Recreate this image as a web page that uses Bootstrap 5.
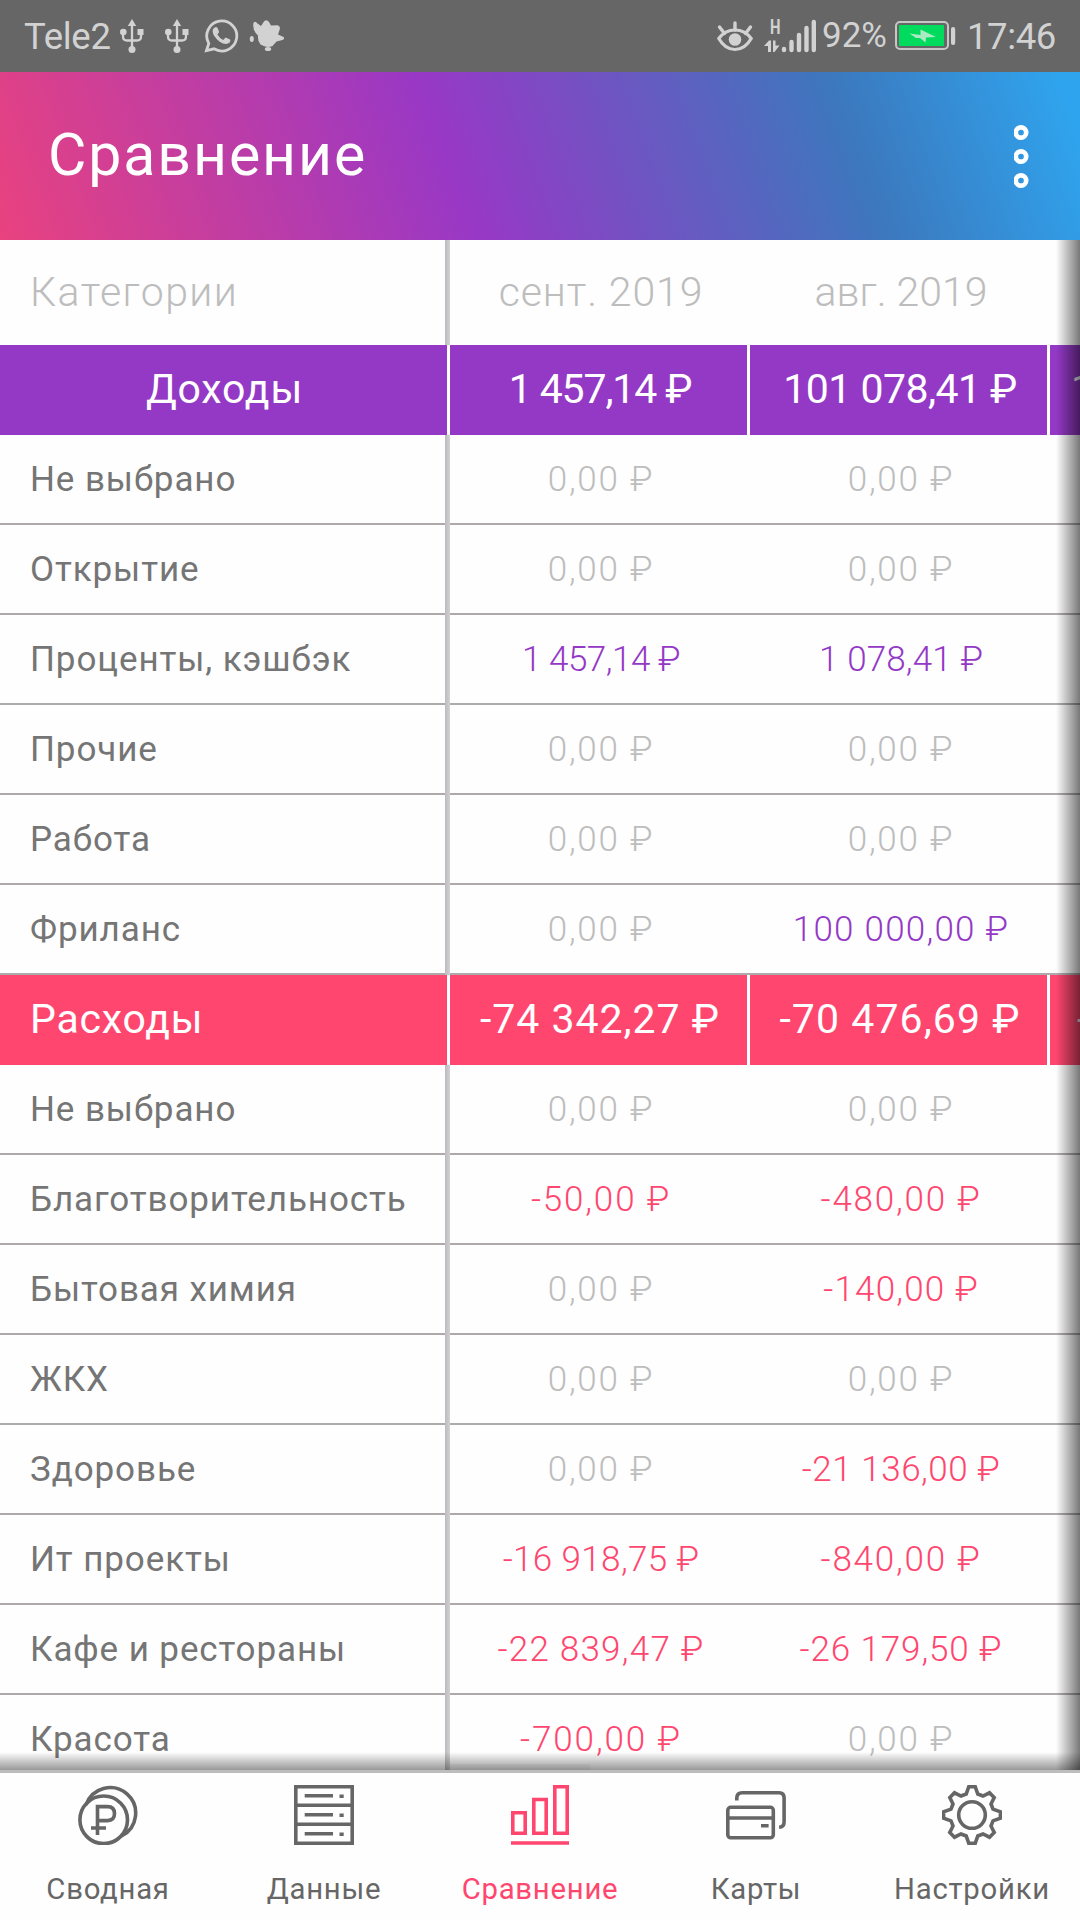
<!DOCTYPE html>
<html lang="ru">
<head>
<meta charset="utf-8">
<meta name="viewport" content="width=device-width, initial-scale=1">
<title>Сравнение</title>
<link href="https://cdn.jsdelivr.net/npm/bootstrap@5.3.0/dist/css/bootstrap.min.css" rel="stylesheet">
<style>
:root{--violet:#9439c6;--rose:#ff466f;--ink:#757575;--mute:#bdbdbd;--rule:#aeaaab}
body{width:1080px;height:1920px;overflow:hidden;background:#fefefe;font-family:Roboto,"Noto Sans",sans-serif;line-height:1}
svg{display:block;flex:none}
.sysbar{height:72px;background:#666;color:#d2d2d2;font-size:36.5px;padding:0 25px 0 24px}
.carrier{width:92px;letter-spacing:-.3px;padding-top:3px}
.pct{width:77px;padding-left:5px;font-size:35px;padding-bottom:1px}
.clock{width:88px;letter-spacing:-.4px;margin-left:9px;padding-top:3px}
.ico-usb2{margin-left:21px}.ico-chat{margin-left:14px}.ico-splash{margin-left:10px}.ico-net{margin-left:11px}
.hspa{font:700 20.5px Roboto,sans-serif}
.appbar{height:168px;background:linear-gradient(70deg,#e9427f 0%,#9838c6 42%,#3c78bd 78%,#2fa4ee 98%);padding:0 50px 0 48px}
.apptitle{font-size:59px;font-weight:400;color:#fff;letter-spacing:1.9px;padding-bottom:2px}
.sheet{height:1530px}
.line{height:90px;width:1350px;flex:none}
.name{width:450px;padding-left:30px;font-size:35px;color:var(--ink);letter-spacing:.9px;border-bottom:2px solid var(--rule);position:relative}
.num{width:300px;font-size:35px;font-weight:300;color:var(--mute);border-bottom:2px solid var(--rule);padding-left:2px}
.name::after{content:"";position:absolute;right:0;top:0;bottom:-2px;width:5px;background:linear-gradient(90deg,#bbbabd,#d2d2d7)}
.heads{height:105px}
.heads .name,.heads .num{border:0;font-size:41px;font-weight:300;color:var(--mute);letter-spacing:1.4px}
.heads .num{letter-spacing:.9px}
.heads .num + .num{letter-spacing:0}
.heads .name::after{bottom:0}
.total .name,.total .num{font-size:41px;font-weight:400;color:#fff;border:0;border-right:3px solid #fff;letter-spacing:.8px;padding-bottom:2px}
.total .num{padding-left:3px}
.total .name::after{display:none}
.total .name.justify-content-center{padding-left:2px}
.inc{color:var(--violet)}.exp{color:var(--rose)}
.bg-inc{background:var(--violet)}.bg-exp{background:var(--rose)}
.total .num.peek{justify-content:flex-start!important;padding-left:21px}
.bg-exp .num.peek{padding-left:27px}
.shade-r{right:0;top:0;bottom:0;width:24px;background:linear-gradient(90deg,rgba(0,0,0,0),rgba(0,0,0,.53))}
.shade-b{left:0;right:0;bottom:0;height:18px;background:linear-gradient(rgba(0,0,0,0),rgba(0,0,0,.4))}
.thumb{left:450px;bottom:0;width:140px;height:6px;background:rgba(0,0,0,.04)}
.tabs{height:150px;border-top:3px solid #bdbdbd;background:#fefefe;font-size:29.3px;color:#666}
.tab{width:216px;padding-top:12px;letter-spacing:.75px;color:inherit;text-decoration:none}
.tab.active{color:var(--rose)}
.tab span{margin-top:30px}
.tab svg{fill:none;stroke:currentColor;stroke-width:3.6}
</style>
</head>
<body>
<svg width="0" height="0" class="position-absolute"><defs>
<g id="usb" fill="#d2d2d2"><path d="M12 0l4.200 7H7.800z"/><path d="M12 5v25M3 13v4.500q0 4 4 4h10q4 0 4-4V13" fill="none" stroke="#d2d2d2" stroke-width="2.300"/><circle cx="3.300" cy="13" r="3.300"/><rect x="17.500" y="10" width="6" height="6"/><circle cx="12" cy="30.500" r="3.500"/></g>
</defs></svg>
<header class="sysbar d-flex align-items-center">
  <span class="carrier">Tele2</span>
  <svg width="24" height="34" class="ms-1"><use href="#usb"/></svg>
  <svg width="24" height="34" class="ico-usb2"><use href="#usb"/></svg>
  <svg width="36" height="36" viewBox="0 0 36 36" class="ico-chat"><path d="M3.500 32.500L5.800 25.500A15 15 0 1 1 11 30.800z" fill="none" stroke="#d2d2d2" stroke-width="2.800"/><path d="M10.500 10.500q2-2.500 3.800-1l1.900 4.400-1.800 2.700q2.200 4 5.800 5.300l2.400-2.300 4.500 2q1 2.800-2.200 4-3.500 1.200-8.500-2.200-6.500-5-6.700-9.800-.2-2 .8-3.100z" fill="#d2d2d2"/></svg>
  <svg width="36" height="36" viewBox="0 0 36 36" class="ico-splash" fill="#d2d2d2"><path d="M4.500 5Q6 2.500 8.500 5.500L12 8 15 3.500Q17.500 1 20 4l2 3.500 6.500-.300Q32 8 30.500 12l-1.500 4.500 5.500 2.500q1.500 1.500-1 3l-6 1.500-4 4.500q-6 2.500-12-1.500-3-3-2.500-9Q3 12 4.500 5z"/><ellipse cx="2.800" cy="21" rx="2" ry="3"/><ellipse cx="19" cy="31" rx="3.200" ry="2"/></svg>
  <div class="ms-auto d-flex align-items-center">
    <svg width="36" height="36" viewBox="0 0 36 36"><path d="M1.800 20.500Q8 12 18 12t16.200 8.500Q28 31.500 18 31.500T1.800 20.500z" fill="none" stroke="#d2d2d2" stroke-width="3.200"/><circle cx="18" cy="21.500" r="6.300" fill="#d2d2d2"/><path d="M18 5v7M2.500 9l5 6.500M33.500 9l-5 6.500" stroke="#d2d2d2" stroke-width="3.400" stroke-linecap="round"/></svg>
    <svg width="53" height="40" viewBox="0 -2 53 40" class="ico-net" fill="#d2d2d2"><text x="6" y="16" class="hspa" textLength="10.500" lengthAdjust="spacingAndGlyphs">H</text><path d="M0 28l5-5.500h2V34H4v-6zM9 22.500h2.500V27.500H15.500l-5 6.500H9z"/><g stroke="#d2d2d2" stroke-width="4.400" stroke-linecap="round"><path d="M20 31v1M27.500 24v8M35 17v15M42.500 10v22M49.800 4v28"/></g></svg>
    <span class="pct text-nowrap">92%</span>
    <svg width="64" height="32" viewBox="0 0 64 32"><rect x="2" y="2" width="52" height="27" rx="4" fill="none" stroke="#c6c6c6" stroke-width="2"/><rect x="5" y="5" width="45" height="21" fill="#00da5d"/><path d="M15.500 13.500l11 1.500V9.500L42 17l-10 .500-.500 5L26 18h-4z" fill="#a8ebc3"/><rect x="57" y="7" width="4.200" height="18" rx="2" fill="#d2d2d2"/></svg>
    <span class="clock text-nowrap">17:46</span>
  </div>
</header>
<div class="appbar d-flex align-items-center justify-content-between">
  <h1 class="apptitle m-0">Сравнение</h1>
  <svg width="16" height="66" viewBox="0 0 16 66" fill="none" stroke="#fff" stroke-width="4.700"><circle cx="7" cy="9.500" r="5.200"/><circle cx="7" cy="33.500" r="5.200"/><circle cx="7" cy="57.500" r="5.200"/></svg>
</div>
<main class="sheet position-relative overflow-hidden">
  <div id="table"></div>
  <div class="shade-r position-absolute"></div><div class="shade-b position-absolute"></div><div class="thumb position-absolute"></div>
</main>
<nav class="tabs d-flex">
  <a class="tab d-flex flex-column align-items-center"><svg width="60" height="60" viewBox="0 0 60 60"><circle cx="25.700" cy="34.800" r="23.800"/><path d="M8 20A25.500 25.500 0 1 1 43.500 51"/><path d="M19.500 50V21.600h10q7 0 7 7t-7 7h-10M13 43h15"/></svg><span>Сводная</span></a>
  <a class="tab d-flex flex-column align-items-center"><svg width="60" height="60" viewBox="0 0 60 60"><path d="M1.800 1.800h56.400v56.400H1.800zM2 20.300h56M2 39.300h56M10.700 10.800H39M10.700 29.800H39M10.700 48.800H39M45.500 11.200h4.200M45.500 30.200h4.200M45.500 49.200h4.200"/></svg><span>Данные</span></a>
  <a class="tab active d-flex flex-column align-items-center"><svg width="60" height="60" viewBox="0 0 60 60"><path d="M2.800 27.800h12.400v20.400H2.800zM23.800 14.500h12.400v33.700H23.800zM44.800 1.800h12.400v46.400H44.800zM1 58h58"/></svg><span>Сравнение</span></a>
  <a class="tab d-flex flex-column align-items-center"><svg width="60" height="60" viewBox="0 0 60 60"><rect x="1.800" y="22.300" width="45.500" height="30.500" rx="3"/><path d="M2 33h45M35 40.800h7.600M10.800 15.500V13q0-5.300 5.300-5.300h37q5 0 5 5.300V37q0 5-5 5.300"/></svg><span>Карты</span></a>
  <a class="tab d-flex flex-column align-items-center"><svg width="60" height="60" viewBox="0 0 60 60"><circle cx="30" cy="30" r="13.300"/><path d="M26.800 1.600h6.400L35.800 9l5.200 2 6.500-3.200 4.700 4.700L49 19l2 5.200 7.400 2.600v6.400L51 35.800 49 41l3.200 6.500-4.700 4.700L41 49l-5.200 2-2.600 7.400h-6.400L24.200 51 19 49l-6.500 3.200-4.700-4.700L11 41l-2-5.200-7.400-2.600v-6.400L9 24.200 11 19l-3.200-6.500 4.700-4.700L19 11l5.200-2z"/></svg><span>Настройки</span></a>
</nav>
<script>
const rows = [
  ['Категории','сент. 2019','авг. 2019','','heads'],
  ['Доходы','1 457,14 ₽','101 078,41 ₽','1','total bg-inc'],
  ['Не выбрано','0,00 ₽','0,00 ₽'],
  ['Открытие','0,00 ₽','0,00 ₽'],
  ['Проценты, кэшбэк','1 457,14 ₽','1 078,41 ₽'],
  ['Прочие','0,00 ₽','0,00 ₽'],
  ['Работа','0,00 ₽','0,00 ₽'],
  ['Фриланс','0,00 ₽','100 000,00 ₽'],
  ['Расходы','-74 342,27 ₽','-70 476,69 ₽','-','total bg-exp'],
  ['Не выбрано','0,00 ₽','0,00 ₽'],
  ['Благотворительность','-50,00 ₽','-480,00 ₽'],
  ['Бытовая химия','0,00 ₽','-140,00 ₽'],
  ['ЖКХ','0,00 ₽','0,00 ₽'],
  ['Здоровье','0,00 ₽','-21 136,00 ₽'],
  ['Ит проекты','-16 918,75 ₽','-840,00 ₽'],
  ['Кафе и рестораны','-22 839,47 ₽','-26 179,50 ₽'],
  ['Красота','-700,00 ₽','0,00 ₽']
];
function tracking(t, total) {
  const extra = {'0':2.2,'1':-4,'₽':4.5,' ':-.5,',':0,'-':3};
  let sum = total ? -5 : 0;
  for (const c of t) sum += c in extra ? extra[c] : 1.2;
  if (t.includes('7,1')) sum -= 5;
  return (sum / t.length / 35).toFixed(4);
}
document.getElementById('table').innerHTML = rows.map(([name, a, b, c = '', kind = '']) => {
  const cell = (t, more = '') => {
    const tone = kind || !t || t.startsWith('0') ? '' : t.startsWith('-') ? 'exp' : 'inc';
    const ls = t.includes('₽') ? ` style="letter-spacing:${tracking(t, t && kind)}em"` : '';
    return `<div class="num ${tone} ${more} d-flex align-items-center justify-content-center"><span${ls}>${t}</span></div>`;
  };
  const mid = name === 'Доходы' ? 'justify-content-center' : '';
  return `<div class="line d-flex ${kind}"><div class="name d-flex align-items-center ${mid}">${name}</div>${cell(a)}${cell(b)}${cell(c, 'peek')}</div>`;
}).join('');
</script>
<script src="https://cdn.jsdelivr.net/npm/bootstrap@5.3.0/dist/js/bootstrap.bundle.min.js"></script>
</body>
</html>
